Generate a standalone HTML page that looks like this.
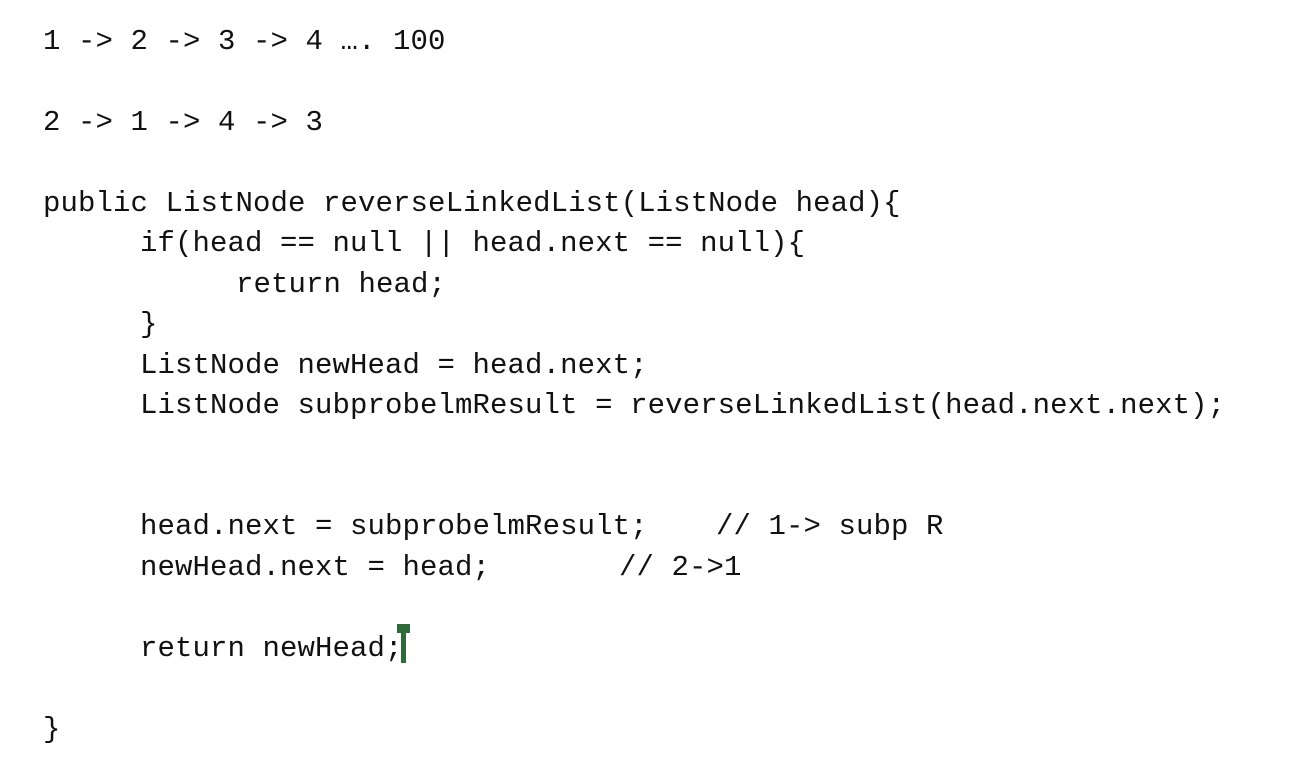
<!DOCTYPE html>
<html><head><meta charset="utf-8"><style>
html,body{margin:0;padding:0;background:#fff;width:1310px;height:778px;overflow:hidden}
.l{position:absolute;font-family:"Liberation Mono",monospace;font-size:29px;letter-spacing:0.1px;line-height:40px;color:#111;white-space:pre}
.c1{position:absolute;left:397px;top:624px;width:13px;height:9px;background:#2f6b3a}
.c2{position:absolute;left:401px;top:624px;width:5px;height:39px;background:#2f6b3a}
</style></head><body>
<div class="l" style="left:43px;top:22px">1 -&gt; 2 -&gt; 3 -&gt; 4 …. 100</div>
<div class="l" style="left:43px;top:103px">2 -&gt; 1 -&gt; 4 -&gt; 3</div>
<div class="l" style="left:43px;top:184px">public ListNode reverseLinkedList(ListNode head){</div>
<div class="l" style="left:140px;top:224px">if(head == null || head.next == null){</div>
<div class="l" style="left:236px;top:265px">return head;</div>
<div class="l" style="left:140px;top:305px">}</div>
<div class="l" style="left:140px;top:346px">ListNode newHead = head.next;</div>
<div class="l" style="left:140px;top:386px">ListNode subprobelmResult = reverseLinkedList(head.next.next);</div>
<div class="l" style="left:140px;top:507px">head.next = subprobelmResult;</div>
<div class="l" style="left:716px;top:507px">// 1-&gt; subp R</div>
<div class="l" style="left:140px;top:548px">newHead.next = head;</div>
<div class="l" style="left:619px;top:548px">// 2-&gt;1</div>
<div class="l" style="left:140px;top:629px">return newHead;</div>
<div class="c1"></div><div class="c2"></div>
<div class="l" style="left:43px;top:710px">}</div>
</body></html>
